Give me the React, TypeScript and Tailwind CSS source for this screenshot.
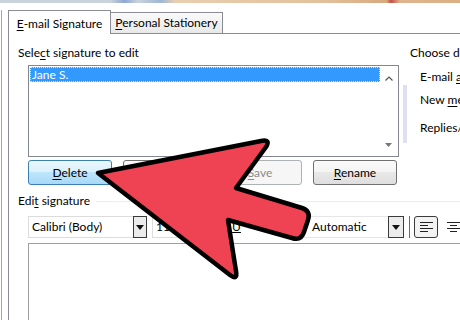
import React from "react";

const U = ({ c }: { c: string }) => (
  <span className="underline underline-offset-[2px] decoration-1">{c}</span>
);

function Tri() {
  return (
    <svg width="8" height="5" viewBox="0 0 8 5">
      <path d="M0 0 L8 0 L4 5 Z" fill="#111" />
    </svg>
  );
}

export default function App() {
  return (
    <div className="relative w-[460px] h-[320px] overflow-hidden bg-white text-black text-[12px] [font-family:Lato,'Liberation_Sans',sans-serif]">
      <div className="h-[3px] bg-[linear-gradient(90deg,#c9d3dc_0%,#c9d3dc_24%,#8fa9d4_27%,#c9d3dc_30%,#9fb6d6_35%,#e9cfb0_38%,#e2c09c_70%,#d9a97e_84%,#c8504a_85%,#e0b58e_87%,#dcae84_100%)]" />
      <div className="flex h-[317px]">
        <div className="w-px ml-[1px] mt-[7px] bg-[#a8a8a8]" />
        <div className="flex-1 flex flex-col pl-[6px] pt-[7px] min-w-0">
          {/* tabs */}
          <div className="flex items-end h-[23px]">
            <div className="relative z-10 w-[103px] h-[24px] -mb-px border border-b-0 border-[#898c95] bg-white flex items-center justify-center pt-[2px] whitespace-nowrap">
              <span>
                <U c="E" />-mail Signature
              </span>
            </div>
            <div className="-ml-px w-[113px] h-[21px] border border-b-0 border-[#898c95] bg-[linear-gradient(180deg,#fafafa,#e9e9e9)] flex items-center justify-center whitespace-nowrap">
              <span>
                <U c="P" />ersonal Stationery
              </span>
            </div>
          </div>
          {/* panel */}
          <div className="flex-1 flex flex-col border-l border-t border-[#898c95] pl-[9px] min-w-0">
            <div className="flex">
              <div className="w-[381px] flex flex-col shrink-0">
                <div className="mt-[11px] h-[16px] leading-[16px] whitespace-nowrap">
                  Sele<U c="c" />t signature to edit
                </div>
                <div className="mt-[4px] ml-[10px] w-[371px] h-[92px] border border-[#828790] flex p-px bg-white">
                  <div className="flex-1 flex flex-col">
                    <div className="h-[15px] bg-[#3399ff] text-white leading-[13px] pl-[1px] border border-dotted border-[#cfe6ff]">
                      Jane S.
                    </div>
                  </div>
                  <div className="w-[17px] flex flex-col items-center justify-between pt-[9px] pb-[8px]">
                    <svg width="8" height="5" viewBox="0 0 8 5">
                      <path d="M0.5 4.5 L4 1 L7.5 4.5" fill="none" stroke="#555" strokeWidth="1.2" />
                    </svg>
                    <svg width="7" height="4" viewBox="0 0 7 4">
                      <path d="M0 0 L7 0 L3.5 4 Z" fill="#777" />
                    </svg>
                  </div>
                </div>
                <div className="mt-[3px] ml-[10px] flex gap-[11px]">
                  <div className="w-[84px] h-[25px] rounded-[3px] border border-[#3c7fb1] bg-[linear-gradient(180deg,#eaf6fd_0%,#d9f0fc_50%,#bee6fd_50%,#a7d9f5_100%)] flex items-center justify-center">
                    <span>
                      <U c="D" />elete
                    </span>
                  </div>
                  <div className="w-[84px] h-[25px] rounded-[3px] border border-[#707070] bg-[linear-gradient(180deg,#fbfbfb_0%,#f0f0f0_50%,#e6e6e6_50%,#dcdcdc_100%)] flex items-center justify-center">
                    <span>
                      <U c="N" />ew
                    </span>
                  </div>
                  <div className="w-[84px] h-[25px] rounded-[3px] border border-[#adb2b5] bg-[#f6f6f6] text-[#8a8a8a] flex items-center justify-center">
                    <span>
                      <U c="S" />ave
                    </span>
                  </div>
                  <div className="w-[84px] h-[25px] rounded-[3px] border border-[#707070] bg-[linear-gradient(180deg,#fbfbfb_0%,#f3f3f3_50%,#e9e9e9_50%,#dedede_100%)] flex items-center justify-center">
                    <span>
                      <U c="R" />ename
                    </span>
                  </div>
                </div>
              </div>
              <div className="ml-[4px] w-[4px] mt-[51px] h-[58px] bg-[#dedff3] shrink-0" />
              <div className="ml-[3px] flex flex-col whitespace-nowrap shrink-0">
                <div className="mt-[11px] h-[16px] leading-[16px]">Choose default signature</div>
                <div className="mt-[8px] pl-[10px] h-[16px] leading-[16px]">
                  E-mail <U c="a" />ccount:
                </div>
                <div className="mt-[7px] pl-[10px] h-[16px] leading-[16px]">
                  New <U c="m" />essages:
                </div>
                <div className="mt-[12px] pl-[10px] h-[16px] leading-[16px]">Replies/forwards:</div>
              </div>
            </div>
            {/* edit signature label */}
            <div className="mt-[8px] h-[16px] flex items-center whitespace-nowrap">
              <span>
                Edi<U c="t" /> signature
              </span>
              <div className="flex-1 h-px bg-[#ededed] ml-[6px]" />
            </div>
            {/* toolbar */}
            <div className="mt-[7px] ml-[10px] h-[22px] flex items-stretch whitespace-nowrap">
              <div className="w-[105px] border-t border-l border-b border-[#dcdcdc] flex items-center pl-[3px]">
                Calibri (Body)
              </div>
              <div className="w-[14px] border border-[#3a3a3a] bg-[#ececec] flex items-center justify-center">
                <Tri />
              </div>
              <div className="ml-[5px] w-[34px] border-t border-l border-b border-[#dcdcdc] flex items-center pl-[3px]">
                11
              </div>
              <div className="w-[14px] border border-[#3a3a3a] bg-[#ececec] flex items-center justify-center">
                <Tri />
              </div>
              <div className="ml-[5px] w-[96px] flex items-center gap-[6px] pl-[4px] font-bold">
                <span>B</span>
                <span className="italic font-normal">I</span>
                <span className="underline font-normal">U</span>
              </div>
              <div className="w-[87px] border-t border-l border-b border-[#e6e6e6] flex items-center pl-[10px]">
                Automatic
              </div>
              <div className="w-[16px] border border-[#3a3a3a] bg-[#ececec] flex items-center justify-center">
                <Tri />
              </div>
              <div className="ml-[5px] w-px bg-[#6b6b6b]" />
              <div className="ml-[4px] w-[24px] rounded-[3px] border border-[#3b3b3b] bg-[#f3f3f3] flex items-center justify-center">
                <svg width="13" height="10" viewBox="0 0 13 10">
                  <path d="M0 0.5H13M0 3.5H8M0 6.5H13M0 9.5H8" stroke="#222" strokeWidth="1" />
                </svg>
              </div>
              <div className="ml-[8px] w-[14px] flex items-center justify-center">
                <svg width="13" height="10" viewBox="0 0 13 10">
                  <path d="M0 0.5H13M3 3.5H10M0 6.5H13M3 9.5H10" stroke="#222" strokeWidth="1" />
                </svg>
              </div>
            </div>
            {/* edit area */}
            <div className="mt-[5px] ml-[10px] flex-1 border-t border-l border-[#a0a0a0] bg-white" />
          </div>
        </div>
      </div>
      {/* red arrow overlay */}
      <svg className="absolute inset-0 pointer-events-none" width="460" height="320" viewBox="0 0 460 320">
        <path
          d="M98 173 L261 141 Q271 139 266 147 L236 188 L302 208 Q311 211 308 220 L304 232 Q301 241 292 238 L228 220 L236 271 Q238 281 230 275 Z"
          fill="#ef4252"
          stroke="#000"
          strokeWidth="4.5"
          strokeLinejoin="round"
        />
      </svg>
    </div>
  );
}
